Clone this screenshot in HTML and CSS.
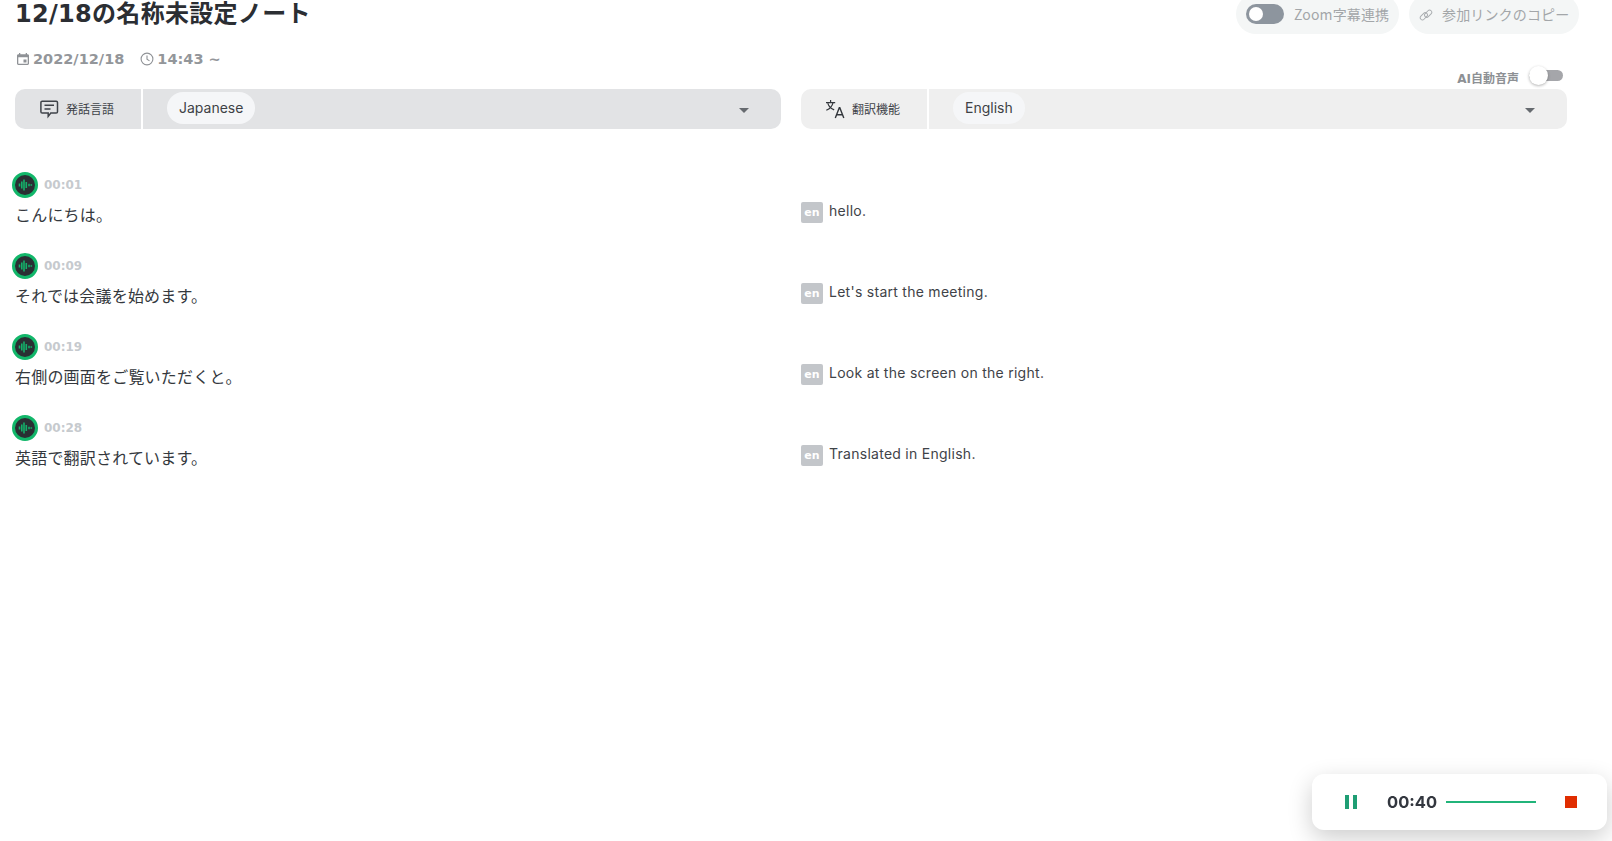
FILE: index.html
```html
<!DOCTYPE html>
<html lang="ja">
<head>
<meta charset="utf-8">
<title>12/18の名称未設定ノート</title>
<link rel="stylesheet" href="styles.css">
</head>
<body>
<main class="page">
  <header class="top">
    <h1 class="title">12/18の名称未設定ノート</h1>
    <div class="actions">
      <div class="pill-btn zoom-btn">
        <span class="switch"><span class="knob"></span></span>
        <span>Zoom字幕連携</span>
      </div>
      <div class="pill-btn link-btn">
        <svg class="link-icon" viewBox="0 0 16 16" fill="none" stroke="#a9adb0" stroke-width="1.1"><rect x="0.800" y="7" width="9.500" height="5" rx="2.500" transform="rotate(-45 5.500 9.500)"/><rect x="5.700" y="4" width="9.500" height="5" rx="2.500" transform="rotate(-45 10.500 6.500)"/></svg>
        <span>参加リンクのコピー</span>
      </div>
    </div>
  </header>

  <div class="meta-row">
    <div class="meta">
      <svg class="meta-icon" viewBox="0 0 14 14"><path fill="#8f9296" d="M3 1h1.3v1.2h5.4V1H11v1.2h.6c.8 0 1.4.6 1.4 1.3v8.1c0 .7-.6 1.4-1.4 1.4H2.4c-.8 0-1.400-.7-1.400-1.400V3.500c0-.7.6-1.300 1.400-1.300H3zM2.300 5.300v6.400h9.400V5.300zM7.500 7.600h3v3h-3z"/></svg>
      <span>2022/12/18</span>
      <svg class="meta-icon clock" viewBox="0 0 14 14" fill="none" stroke="#8f9296" stroke-width="1.1"><circle cx="7" cy="7" r="5.900"/><path d="M7 3.400V7.300l2.500 1.600"/></svg>
      <span>14:43 ~</span>
    </div>
    <div class="ai">
      <span>AI自動音声</span>
      <span class="ai-switch"><span class="ai-knob"></span></span>
    </div>
  </div>

  <section class="columns bars">
    <div class="bar bar-dark">
      <div class="bar-label">
        <svg class="bar-icon" viewBox="0 0 20 20" fill="none" stroke="#3f4349" stroke-width="1.5"><path d="M3.200 2.200h14c.8 0 1.300.6 1.300 1.300v9.200c0 .7-.5 1.300-1.300 1.300h-5.400l-2.600 3.400v-3.400H3.200c-.8 0-1.300-.6-1.300-1.300V3.500c0-.7.5-1.300 1.300-1.300z"/><path d="M5.500 6.300h9.500M5.500 10h6"/></svg>
        <span class="label-text">発話言語</span>
      </div>
      <div class="bar-field">
        <span class="lang-pill">Japanese</span>
        <span class="caret"></span>
      </div>
    </div>
    <div class="bar bar-light">
      <div class="bar-label">
        <svg class="bar-icon" viewBox="0 0 20 20" fill="none" stroke="#33373c" stroke-width="1.2"><path d="M1 3.600h9.200M5.600 1v2.600M8 3.800C7.200 7.200 4.600 9.800 1.300 11.200M2.800 4.400c1 3 3.600 5.400 6.400 6.500"/><path stroke-width="1.400" d="M10.300 19 14.300 8.800h.5L18.800 19M11.700 15.800h5.700"/></svg>
        <span class="label-text">翻訳機能</span>
      </div>
      <div class="bar-field">
        <span class="lang-pill">English</span>
        <span class="caret"></span>
      </div>
    </div>
  </section>

  <section class="rows">
    <div class="columns row">
      <div class="source">
        <div class="speaker">
          <svg class="avatar" viewBox="0 0 26 26"><circle cx="13" cy="13" r="11.500" fill="#2a2f33" stroke="#12b76a" stroke-width="3"/><path stroke="#14b06a" stroke-width="1.600" fill="none" d="M7.500 11.500v3M9.800 9.500v7M12 7.500v11M14.300 10v6M17 11.700v2.600M19.300 12.200v1.600"/></svg>
          <span class="stamp">00:01</span>
        </div>
        <p class="speech">こんにちは。</p>
      </div>
      <div class="target"><span class="badge">en</span><span class="trans">hello.</span></div>
    </div>
    <div class="columns row">
      <div class="source">
        <div class="speaker">
          <svg class="avatar" viewBox="0 0 26 26"><circle cx="13" cy="13" r="11.500" fill="#2a2f33" stroke="#12b76a" stroke-width="3"/><path stroke="#14b06a" stroke-width="1.600" fill="none" d="M7.500 11.500v3M9.800 9.500v7M12 7.500v11M14.300 10v6M17 11.700v2.600M19.300 12.200v1.600"/></svg>
          <span class="stamp">00:09</span>
        </div>
        <p class="speech">それでは会議を始めます。</p>
      </div>
      <div class="target"><span class="badge">en</span><span class="trans">Let's start the meeting.</span></div>
    </div>
    <div class="columns row">
      <div class="source">
        <div class="speaker">
          <svg class="avatar" viewBox="0 0 26 26"><circle cx="13" cy="13" r="11.500" fill="#2a2f33" stroke="#12b76a" stroke-width="3"/><path stroke="#14b06a" stroke-width="1.600" fill="none" d="M7.500 11.500v3M9.800 9.500v7M12 7.500v11M14.300 10v6M17 11.700v2.600M19.300 12.200v1.600"/></svg>
          <span class="stamp">00:19</span>
        </div>
        <p class="speech">右側の画面をご覧いただくと。</p>
      </div>
      <div class="target"><span class="badge">en</span><span class="trans">Look at the screen on the right.</span></div>
    </div>
    <div class="columns row">
      <div class="source">
        <div class="speaker">
          <svg class="avatar" viewBox="0 0 26 26"><circle cx="13" cy="13" r="11.500" fill="#2a2f33" stroke="#12b76a" stroke-width="3"/><path stroke="#14b06a" stroke-width="1.600" fill="none" d="M7.500 11.500v3M9.800 9.500v7M12 7.500v11M14.300 10v6M17 11.700v2.600M19.300 12.200v1.600"/></svg>
          <span class="stamp">00:28</span>
        </div>
        <p class="speech">英語で翻訳されています。</p>
      </div>
      <div class="target"><span class="badge">en</span><span class="trans">Translated in English.</span></div>
    </div>
  </section>
</main>

<aside class="recorder">
  <span class="pause"><i></i><i></i></span>
  <span class="clock-time">00:40</span>
  <span class="wave"></span>
  <span class="stop"></span>
</aside>
</body>
</html>
```

FILE: styles.css
```css
* { box-sizing: border-box; }
html, body { margin: 0; height: 100%; overflow: hidden; background: #fff; }
body { font-family: "Noto Sans CJK JP", "Noto Sans", sans-serif; color: #33373c; }

.page { padding: 0 33px 0 15px; height: 100%; }

.top { display: flex; justify-content: space-between; align-items: flex-start; height: 48px; }
.title { margin: 0; font-size: 24px; line-height: 28px; font-weight: 700; letter-spacing: .3px; color: #2b2e33; font-family: "DejaVu Sans", "Noto Sans CJK JP", sans-serif; }
.actions { display: flex; gap: 10px; margin-top: -6px; }
.pill-btn { display: flex; align-items: center; height: 40px; border-radius: 20px; background: #f4f6f6; color: #a3a6a9; font-size: 14px; letter-spacing: .15px; }
.zoom-btn { width: 163px; padding-left: 10px; gap: 10px; }
.link-btn { width: 170px; padding-left: 10px; gap: 9px; }
.switch { width: 38px; height: 20px; border-radius: 10px; background: #8d959e; padding: 3px; display: block; }
.knob { display: block; width: 14px; height: 14px; border-radius: 50%; background: #fff; }
.link-icon { width: 14px; height: 14px; margin-top: 2px; }

.meta-row { display: flex; justify-content: space-between; align-items: flex-start; height: 41px; }
.meta { display: flex; align-items: center; height: 22px; color: #93969a; font: 700 14.500px "DejaVu Sans", sans-serif; }
.meta-icon { width: 14px; height: 14px; margin: 0 3px 0 1px; }
.clock { margin-left: 16px; }
.ai { display: flex; align-items: center; gap: 10px; margin: 19px 16px 0 0; color: #8d9094; font: 700 12px "DejaVu Sans", "Noto Sans CJK JP", sans-serif; height: 20px; }
.ai-switch { position: relative; display: block; width: 34px; height: 11px; border-radius: 6px; background: #a5a6aa; margin-top: -4px; }
.ai-knob { position: absolute; left: 0; top: -4px; width: 19px; height: 19px; border-radius: 50%; background: #fff; box-shadow: 0 1px 3px rgba(0,0,0,.3); }

.columns { display: grid; grid-template-columns: 766px 766px; column-gap: 20px; }

.bar { display: flex; height: 40px; border-radius: 10px; overflow: hidden; }
.bar-dark { background: #e2e3e5; }
.bar-light { background: #efefef; }
.bar-label { display: flex; align-items: center; justify-content: center; gap: 7px; border-right: 2px solid #fff; font-size: 12px; color: #3f4349; flex: none; width: 128px; padding-right: 3px; }
.label-text { margin-top: -2px; }
.bar-icon { width: 20px; height: 20px; }
.bar-field { flex: 1; display: flex; align-items: center; justify-content: space-between; padding: 0 32px 0 24px; }
.lang-pill { display: flex; align-items: center; height: 32px; padding: 0 12px; border-radius: 16px; background: #f5f6f8; font: 14px "Inter", sans-serif; color: #3e4246; margin-top: -2px; padding-bottom: 2px; }
.caret { width: 0; height: 0; border-left: 5px solid transparent; border-right: 5px solid transparent; border-top: 5px solid #666a6f; margin-top: 2px; }

.rows { padding-top: 43px; }
.row { height: 81px; }
.source { margin-left: -3px; }
.speaker { display: flex; align-items: center; gap: 6px; height: 26px; }
.avatar { width: 26px; height: 26px; display: block; }
.stamp { font: 700 12px "DejaVu Sans", sans-serif; color: #c6cace; }
.speech { margin: 5px 0 0 3px; font-size: 16px; line-height: 22px; letter-spacing: .2px; color: #34383d; }
.target { display: flex; align-items: flex-start; gap: 6px; padding-top: 30px; }
.badge { display: flex; align-items: center; justify-content: center; width: 22px; height: 21px; border-radius: 2px; background: #c3c6ca; color: #fff; font: 700 11px "DejaVu Sans", sans-serif; }
.trans { font: 14px/19px "Inter", sans-serif; letter-spacing: .27px; color: #3f4348; margin-top: -1px; }

.recorder { position: fixed; left: 1312px; top: 774px; width: 295px; height: 56px; border-radius: 12px; background: #fff; box-shadow: 0 8px 24px rgba(0,0,0,.2); display: flex; align-items: center; padding-left: 33px; }
.pause { display: flex; gap: 4px; width: 13px; height: 14px; flex: none; }
.pause i { display: block; width: 4px; height: 14px; background: #1f9e74; }
.clock-time { margin-left: 29px; font: 700 16.500px "Inter", sans-serif; color: #33373f; width: 59px; }
.wave { display: block; width: 90px; height: 2px; background: #21b47a; }
.stop { display: block; width: 12px; height: 12px; background: #e02d00; margin-left: 29px; }
```
